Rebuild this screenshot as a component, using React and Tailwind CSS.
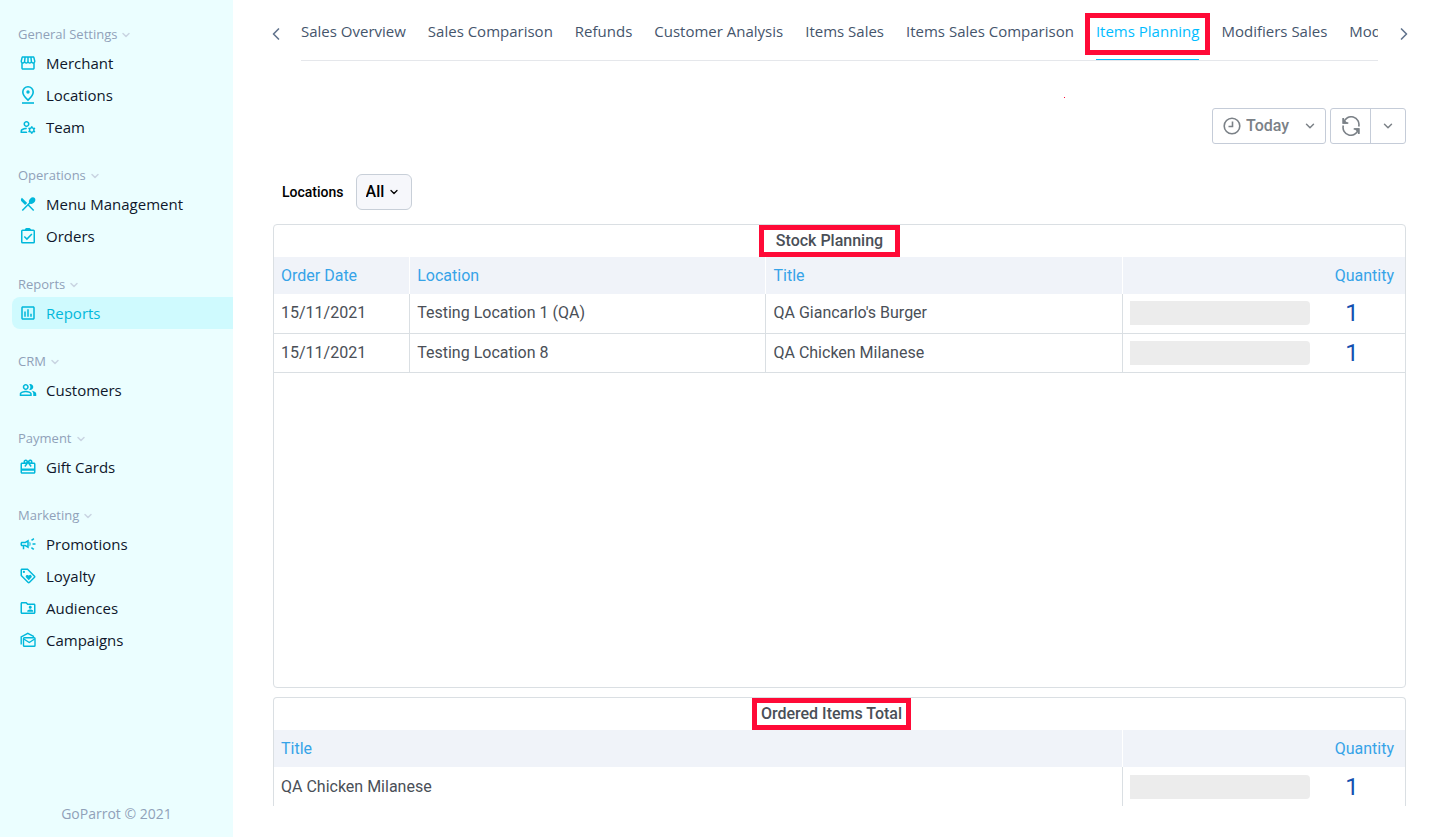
import { useState } from "react";

import {
  MdOutlineStorefront,
  MdOutlineManageAccounts,
  MdRestaurantMenu,
  MdOutlineInsertChart,
  MdOutlinePeopleAlt,
  MdOutlineRedeem,
  MdOutlineFolderShared,
  MdOutlineLoyalty,
  MdOutlineCampaign,
} from "react-icons/md";

import { ChevronDown, ChevronLeft, ChevronRight } from "lucide-react";

// CUSTOM ICONS
const PinIcon = () => (
  <svg viewBox="0 0 16 20" className="h-5 w-4" fill="none" stroke="currentColor" strokeWidth="1.6">
    <path d="M8 15.2C4.600 12 2.800 9.500 2.800 6.900a5.200 5.200 0 0 1 10.400 0C13.200 9.500 11.400 12 8 15.200Z" />
    <circle cx="8" cy="7" r="1.700" fill="currentColor" stroke="none" />
    <path d="M2 18h12" />
  </svg>
);

const ClipboardIcon = () => (
  <svg viewBox="0 0 16 16" className="size-4" fill="none" stroke="currentColor" strokeWidth="1.5">
    <rect x="1.75" y="2.25" width="12.5" height="12.5" rx="0.8" />
    <path d="M5.500 2.200a2.500 1.700 0 0 1 5 0" fill="currentColor" />
    <path d="m4.300 8.500 2.600 2.600 5-5.200" />
  </svg>
);

const MailsIcon = () => (
  <svg viewBox="0 0 16 16" className="size-4" fill="none" stroke="currentColor" strokeWidth="1.4">
    <path d="M1.200 12.500V5L7.800 1.400 14 4.600" />
    <rect x="3.500" y="5.700" width="11.500" height="8.600" rx="0.8" />
    <path d="m3.800 7 5.450 3.500L14.700 7" />
  </svg>
);

const RefreshIcon = () => (
  <svg viewBox="0 0 20 20" className="size-5" fill="none" stroke="currentColor" strokeWidth="1.6">
    <path d="M2.300 2v5h5" />
    <path d="M2.800 6.500A7.700 7.700 0 0 1 17.700 10.500" />
    <path d="M17.700 18v-5h-5" />
    <path d="M17.200 13.500A7.700 7.700 0 0 1 2.300 9.500" />
    <path d="M2.300 4v3h3zM17.700 16v-3h-3z" fill="currentColor" />
  </svg>
);

const ClockIcon = () => (
  <svg viewBox="0 0 18 18" className="size-[18px]" fill="none" stroke="currentColor" strokeWidth="1.6">
    <circle cx="9" cy="9" r="7.800" />
    <path d="M9.500 4.500v5H5.500" />
  </svg>
);

const menu = [
  {
    title: "General Settings",
    items: [
      { name: "Merchant", icon: MdOutlineStorefront },
      { name: "Locations", icon: PinIcon },
      { name: "Team", icon: MdOutlineManageAccounts },
    ],
  },
  {
    title: "Operations",
    items: [
      { name: "Menu Management", icon: MdRestaurantMenu },
      { name: "Orders", icon: ClipboardIcon },
    ],
  },
  { title: "Reports", items: [{ name: "Reports", icon: MdOutlineInsertChart, active: true }] },
  { title: "CRM", items: [{ name: "Customers", icon: MdOutlinePeopleAlt }] },
  { title: "Payment", items: [{ name: "Gift Cards", icon: MdOutlineRedeem }] },
  {
    title: "Marketing",
    items: [
      { name: "Promotions", icon: MdOutlineCampaign },
      { name: "Loyalty", icon: MdOutlineLoyalty },
      { name: "Audiences", icon: MdOutlineFolderShared },
      { name: "Campaigns", icon: MailsIcon },
    ],
  },
];

const tabs = [
  "Sales Overview",
  "Sales Comparison",
  "Refunds",
  "Customer Analysis",
  "Items Sales",
  "Items Sales Comparison",
  "Items Planning",
  "Modifiers Sales",
  "Modifiers",
];

const stock = [
  { date: "15/11/2021", location: "Testing Location 1 (QA)", title: "QA Giancarlo's Burger", quantity: 1 },
  { date: "15/11/2021", location: "Testing Location 8", title: "QA Chicken Milanese", quantity: 1 },
];

const totals = [{ title: "QA Chicken Milanese", quantity: 1 }];

function Sidebar() {
  return (
    <aside className="flex w-[233px] shrink-0 flex-col justify-between bg-[#ebfeff] pt-[22px] pb-3">
      <nav className="flex flex-col gap-5">
        {menu.map((group) => (
          <div key={group.title}>
            <button className="flex h-[25px] items-center gap-[3px] pl-[18px] text-[13px] text-slate-400">
              {group.title}
              <ChevronDown size={12} strokeWidth={3} className="text-slate-300" />
            </button>

            <div className="pl-3">
              {group.items.map((item) => (
                <a
                  key={item.name}
                  href="#"
                  className={`flex h-8 items-center gap-[9px] rounded-l-lg pl-[7px] text-[15px] ${
                    item.active ? "bg-[#cffafe] text-cyan-500" : "text-slate-900"
                  }`}
                >
                  <span className="flex w-[18px] justify-center text-lg text-cyan-500">
                    <item.icon />
                  </span>
                  {item.name}
                </a>
              ))}
            </div>
          </div>
        ))}
      </nav>

      <p className="text-center text-sm leading-[22px] text-slate-400">GoParrot © 2021</p>
    </aside>
  );
}

function Tabs() {
  const [active, setActive] = useState("Items Planning");

  return (
    <div className="flex items-start">
      <button aria-label="Previous reports" className="flex h-[61px] w-7 shrink-0 items-center pt-[7px] text-slate-500">
        <ChevronLeft size={20} className="-ml-[7px]" />
      </button>

      <div className="flex h-[61px] min-w-0 flex-1 gap-[22px] overflow-hidden border-b border-gray-200 text-[15px] whitespace-nowrap">
        {tabs.map((tab) => (
          <button
            key={tab}
            onClick={() => setActive(tab)}
            className={`relative h-[60px] shrink-0 border-b pt-2 pb-1 ${
              tab === active ? "border-sky-400 text-sky-400" : "border-transparent text-slate-600"
            }`}
          >
            {tab}
            {tab === active && (
              <span className="absolute -inset-x-[11px] top-[13px] h-[42px] border-5 border-[#ff0a37]" />
            )}
          </button>
        ))}
      </div>

      <button aria-label="Next reports" className="flex h-[61px] w-7 shrink-0 items-center justify-end pt-[7px] text-slate-500">
        <ChevronRight size={20} className="-mr-2" />
      </button>
    </div>
  );
}

function QuantityCell({ value }) {
  return (
    <td className="pr-[11px] pl-[7px]">
      <div className="flex items-center">
        <div className="h-6 flex-1 rounded-r-sm bg-[#ececec]" />
        <span className="w-[84px] text-center text-2xl leading-8 text-[#1450b0]">{value}</span>
      </div>
    </td>
  );
}

const headCell = "border-r border-white px-[7px] text-left font-normal";
const bodyCell = "border-r border-[#dadfe3] px-[7px]";

export default function App() {
  const [range, setRange] = useState("Today");

  return (
    <div className="flex min-h-screen bg-white font-['Open_Sans',sans-serif]">
      <Sidebar />

      <main className="min-w-0 flex-1 pr-[29px] pl-10">
        <Tabs />

        {/* TOOLBAR */}
        <div className="relative mt-[47px] flex justify-end gap-1 font-[Roboto,sans-serif] text-[#7b8187]">
          <span className="absolute -top-[11px] right-[341px] size-px bg-[#ff0a37]" />

          <label className="relative flex h-9 w-[114px] items-center rounded-[3px] border border-[#c5ccd8]">
            <span className="pointer-events-none absolute left-[10px]">
              <ClockIcon />
            </span>
            <select
              aria-label="Period"
              value={range}
              onChange={(e) => setRange(e.target.value)}
              className="h-full w-full appearance-none pr-6 pl-[33px] text-base font-medium outline-none"
            >
              <option>Today</option>
              <option>Yesterday</option>
            </select>
            <ChevronDown size={14} strokeWidth={2.5} className="pointer-events-none absolute right-2" />
          </label>

          <div className="flex h-9 rounded-[3px] border border-[#c5ccd8]">
            <button aria-label="Refresh" className="flex w-10 items-center justify-center border-r border-[#c5ccd8]">
              <RefreshIcon />
            </button>
            <button aria-label="Refresh options" className="flex w-[34px] items-center justify-center">
              <ChevronDown size={14} strokeWidth={2.5} />
            </button>
          </div>
        </div>

        {/* FILTERS */}
        <div className="mt-[30px] flex items-center gap-3 pl-[9px] font-[Roboto,sans-serif] text-black">
          <label htmlFor="locations" className="text-sm font-medium">
            Locations
          </label>
          <div className="relative flex items-center">
            <select
              id="locations"
              className="h-9 w-14 appearance-none rounded-md border border-[#c8cfd8] bg-[#f6f7fb] pl-[9px] text-base font-medium"
            >
              <option>All</option>
            </select>
            <ChevronDown size={12} strokeWidth={2.5} className="pointer-events-none absolute right-3" />
          </div>
        </div>

        <div className="mt-[14px] flex flex-col gap-[9px] font-[Roboto,sans-serif] text-base text-[#4a4f57]">
          {/* STOCK PLANNING */}
          <section className="min-h-[464px] rounded border border-[#dadfe3]">
            <div className="flex h-8 justify-center pr-5">
              <h2 className="flex items-center border-5 border-[#ff0a37] px-3 leading-5 font-medium">
                Stock Planning
              </h2>
            </div>

            <table className="w-full table-fixed">
              <thead>
                <tr className="h-[37px] bg-[#f0f3f9] text-[#36a3e8]">
                  <th className={`w-[12%] ${headCell}`}>Order Date</th>
                  <th className={`w-[31.5%] ${headCell}`}>Location</th>
                  <th className={`w-[31.5%] ${headCell}`}>Title</th>
                  <th className="w-1/4 pr-[11px] text-right font-normal">Quantity</th>
                </tr>
              </thead>
              <tbody>
                {stock.map((row) => (
                  <tr key={row.location} className="h-[39px] border-b border-[#dadfe3]">
                    <td className={bodyCell}>{row.date}</td>
                    <td className={bodyCell}>{row.location}</td>
                    <td className={bodyCell}>{row.title}</td>
                    <QuantityCell value={row.quantity} />
                  </tr>
                ))}
              </tbody>
            </table>
          </section>

          {/* ORDERED ITEMS TOTAL */}
          <section className="rounded-t border border-b-0 border-[#dadfe3]">
            <div className="flex h-8 justify-center pr-4">
              <h2 className="flex items-center border-5 border-[#ff0a37] px-1 leading-5 font-medium">
                Ordered Items Total
              </h2>
            </div>

            <table className="w-full table-fixed">
              <thead>
                <tr className="h-[37px] bg-[#f0f3f9] text-[#36a3e8]">
                  <th className={`w-3/4 ${headCell}`}>Title</th>
                  <th className="w-1/4 pr-[11px] text-right font-normal">Quantity</th>
                </tr>
              </thead>
              <tbody>
                {totals.map((row) => (
                  <tr key={row.title} className="h-[39px]">
                    <td className={bodyCell}>{row.title}</td>
                    <QuantityCell value={row.quantity} />
                  </tr>
                ))}
              </tbody>
            </table>
          </section>
        </div>
      </main>
    </div>
  );
}
